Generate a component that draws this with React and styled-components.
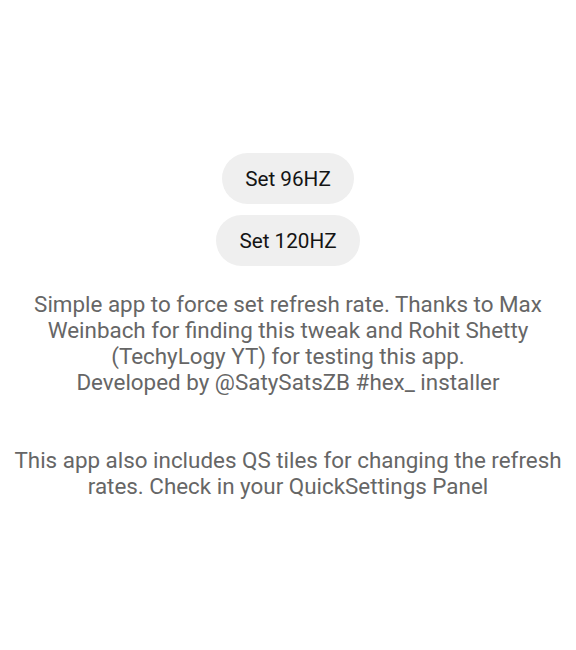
import React from 'react'
import styled, { createGlobalStyle } from 'styled-components'

const GlobalStyle = createGlobalStyle`
    body {
        margin: 0;
        background: #ffffff;
        font-family: Roboto, "Noto Sans", sans-serif;
    }
`

function App() {
    return (
        <Screen>
            <GlobalStyle />
            <Buttons>
                <RateButton>Set 96HZ</RateButton>
                <RateButton>Set 120HZ</RateButton>
            </Buttons>
            <Info>
                Simple app to force set refresh rate. Thanks to Max Weinbach for finding this tweak and Rohit Shetty (TechyLogy YT) for testing this app.
                <br />
                Developed by @SatySatsZB #hex_ installer
            </Info>
            <Info $wide>
                This app also includes QS tiles for changing the refresh rates. Check in your QuickSettings Panel
            </Info>
        </Screen>
    )
}

export default App

const Screen = styled.div`
    width: 576px;
    height: 650px;
    display: flex;
    flex-direction: column;
    align-items: center;
    padding-top: 153px;
    box-sizing: border-box;
`
const Buttons = styled.div`
    display: flex;
    flex-direction: column;
    align-items: center;
    gap: 11px;
`
const RateButton = styled.button`
    height: 51px;
    padding: 0 23px;
    border: none;
    border-radius: 26px;
    background: #efefef;
    color: #141414;
    font-family: Roboto, sans-serif;
    font-size: 20.7px;
    font-weight: 400;
`
const Info = styled.p`
    margin: ${p => (p.$wide ? '52px 0 0' : '25px 0 0')};
    padding: 0 ${p => (p.$wide ? '8px' : '28px')};
    text-align: center;
    color: #666666;
    font-size: 22.4px;
    line-height: 26px;
`
